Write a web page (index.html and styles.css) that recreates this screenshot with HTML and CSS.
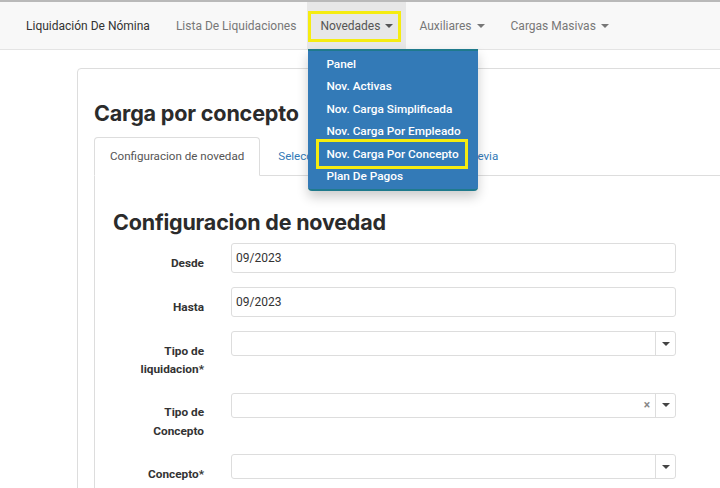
FILE: index.html
```html
<!DOCTYPE html>
<html lang="es">
<head>
<meta charset="utf-8">
<title>Carga por concepto</title>
<link rel="stylesheet" href="styles.css">
</head>
<body>
<div class="topline"></div>
<nav class="navbar">
  <a class="brand">Liquidación De Nómina</a>
  <a class="nav-link">Lista De Liquidaciones</a>
  <div class="nav-item active">
    <a class="nav-link">Novedades <span class="caret"></span></a>
    <span class="highlight nav-highlight"></span>
    <ul class="dropdown">
      <li>Panel</li>
      <li>Nov. Activas</li>
      <li>Nov. Carga Simplificada</li>
      <li>Nov. Carga Por Empleado</li>
      <li>Nov. Carga Por Concepto</li>
      <li>Plan De Pagos</li>
      <span class="highlight menu-highlight"></span>
    </ul>
  </div>
  <a class="nav-link">Auxiliares <span class="caret"></span></a>
  <a class="nav-link">Cargas Masivas <span class="caret"></span></a>
</nav>

<main class="main">
  <section class="card">
    <h1 class="title">Carga por concepto</h1>
    <ul class="tabs">
      <li class="tab active">Configuracion de novedad</li>
      <li class="tab">Seleccion de empleados</li>
      <li class="tab">Vista previa</li>
    </ul>
    <div class="tab-pane">
      <h2 class="subtitle">Configuracion de novedad</h2>
      <form class="form">
        <div class="row">
          <label class="label">Desde</label>
          <div class="input">09/2023</div>
        </div>
        <div class="row">
          <label class="label">Hasta</label>
          <div class="input">09/2023</div>
        </div>
        <div class="row">
          <label class="label">Tipo de<br>liquidacion*</label>
          <div class="select"><span class="sel-value"></span><span class="sel-arrow"><span class="tri"></span></span></div>
        </div>
        <div class="row">
          <label class="label">Tipo de<br>Concepto</label>
          <div class="select"><span class="sel-value"></span><span class="sel-clear">×</span><span class="sel-arrow"><span class="tri"></span></span></div>
        </div>
        <div class="row">
          <label class="label">Concepto*</label>
          <div class="select"><span class="sel-value"></span><span class="sel-arrow"><span class="tri"></span></span></div>
        </div>
      </form>
    </div>
  </section>
</main>
</body>
</html>
```

FILE: styles.css
```css
* { box-sizing: border-box; }
html, body {
  margin: 0;
  padding: 0;
  width: 720px;
  height: 488px;
  overflow: hidden;
  background: #fff;
  font-family: Roboto, "Liberation Sans", Arial, sans-serif;
  color: #333;
}
.topline {
  height: 2px;
  background: #b9b9b9;
}
.navbar {
  display: flex;
  align-items: stretch;
  height: 48px;
  background: #f8f8f8;
  border-bottom: 1px solid #e4e4e4;
  padding-left: 11px;
  font-size: 12px;
  position: relative;
  z-index: 10;
}
.brand {
  display: flex;
  align-items: center;
  padding: 0 13px 0 15px;
  color: #333;
}
.nav-link {
  display: flex;
  align-items: center;
  padding: 0 13px;
  color: #777;
  white-space: nowrap;
}
.nav-item {
  position: relative;
  display: flex;
}
.nav-item.active {
  background: #e7e7e7;
  margin-left: -2px;
}
.nav-item.active .nav-link {
  color: #555;
  padding: 0 13px 0 13px;
}
.caret {
  display: inline-block;
  width: 0;
  height: 0;
  margin-left: 5px;
  border-top: 4px solid currentColor;
  border-left: 4px solid transparent;
  border-right: 4px solid transparent;
  vertical-align: middle;
}
.highlight {
  position: absolute;
  border: 3px solid #f5ec10;
  pointer-events: none;
}
.nav-highlight {
  left: 1px;
  top: 9px;
  width: 93px;
  height: 31px;
}
.dropdown {
  position: absolute;
  top: 47px;
  left: 1px;
  width: 170px;
  margin: 0;
  padding: 2px 0;
  list-style: none;
  background: #337ab7;
  border-top: 2px solid #1f7a8c;
  border-bottom: 2px solid #1f7a8c;
  border-radius: 0 0 4px 4px;
  box-shadow: 0 6px 12px rgba(0, 0, 0, 0.2);
}
.dropdown li {
  height: 22.4px;
  line-height: 22.4px;
  padding-left: 18px;
  color: #fff;
  font-size: 11.8px;
  font-weight: 500;
  white-space: nowrap;
}
.menu-highlight {
  left: 8px;
  top: 88px;
  width: 152px;
  height: 30px;
}

.main {
  margin: 18px 0 0 77px;
  width: 700px;
}
.card {
  border: 1px solid #ddd;
  border-radius: 4px;
  padding: 31px 0 0 16px;
  height: 460px;
}
.title {
  margin: 0 0 11px 0;
  font-family: Inter, Roboto, "Liberation Sans", sans-serif;
  font-size: 21.6px;
  line-height: 26px;
  font-weight: 700;
  color: #2b2b2b;
  letter-spacing: -0.2px;
}
.tabs {
  display: flex;
  margin: 0;
  padding: 0;
  list-style: none;
  border-bottom: 1px solid #ddd;
}
.tab {
  margin-right: 2px;
  margin-bottom: -1px;
  padding: 10px 15px;
  line-height: 17px;
  font-size: 11.6px;
  color: #337ab7;
  border: 1px solid transparent;
  border-radius: 4px 4px 0 0;
  white-space: nowrap;
}
.tab.active {
  color: #555;
  background: #fff;
  border-color: #ddd #ddd transparent #ddd;
}
.tab-pane {
  border-left: 1px solid #ddd;
  padding: 32px 0 0 18px;
  height: 320px;
}
.subtitle {
  margin: 0 0 7px 0;
  font-family: Inter, Roboto, "Liberation Sans", sans-serif;
  font-size: 21.5px;
  line-height: 28px;
  font-weight: 700;
  color: #2b2b2b;
  letter-spacing: -0.2px;
}
.form {
  display: flex;
  flex-direction: column;
}
.row {
  display: grid;
  grid-template-columns: 91px 445px;
  column-gap: 27px;
  align-items: start;
  margin-bottom: 14px;
}
.label {
  text-align: right;
  font-size: 11.8px;
  font-weight: 700;
  line-height: 18.5px;
  padding-top: 10.5px;
  color: #333;
}
.input {
  height: 30px;
  border: 1px solid #ddd;
  border-radius: 3px;
  padding: 0 4px;
  line-height: 28px;
  font-size: 12px;
  color: #333;
}
.select {
  display: flex;
  height: 25px;
  border: 1px solid #ddd;
  border-radius: 3px;
}
.sel-value { flex: 1; }
.sel-clear {
  width: 16px;
  line-height: 23px;
  text-align: center;
  color: #888;
  font-size: 12px;
  font-weight: 700;
}
.sel-arrow {
  width: 20px;
  border-left: 1px solid #ddd;
  display: flex;
  align-items: center;
  justify-content: center;
}
.tri {
  width: 0;
  height: 0;
  border-top: 4px solid #444;
  border-left: 4px solid transparent;
  border-right: 4px solid transparent;
}
```
